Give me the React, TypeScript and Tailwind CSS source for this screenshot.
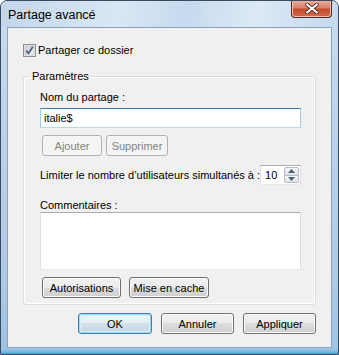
import React from 'react';

// Vista style push button
function Btn({
  children,
  className = '',
  variant = 'normal',
}: {
  children: React.ReactNode;
  className?: string;
  variant?: 'normal' | 'default' | 'disabled';
}) {
  const styles = {
    normal:
      'border-[#707070] bg-[linear-gradient(#f2f2f2,#ebebeb_50%,#dddddd_50%,#cfcfcf)] shadow-[inset_0_0_0_1px_#fcfcfc] text-black',
    default:
      'border-[#3c7fb1] bg-[linear-gradient(#eef5f9,#e4eef4_50%,#d3e1ea_50%,#c4d6e1)] shadow-[inset_0_0_0_1px_#9bd9f5,inset_0_0_0_2px_#d4eefa] text-black',
    disabled: 'border-[#adb2b5] bg-[#f4f4f4] text-[#838383]',
  }[variant];
  return (
    <button
      className={`h-[21px] rounded-[3px] border whitespace-nowrap flex items-center justify-center ${styles} ${className}`}
    >
      {children}
    </button>
  );
}

function CheckBox() {
  return (
    <svg width="13" height="13" viewBox="0 0 13 13">
      <defs>
        <linearGradient id="cb" x1="0" y1="0" x2="1" y2="1">
          <stop offset="0" stopColor="#cbcfd5" />
          <stop offset="1" stopColor="#f6f6f6" />
        </linearGradient>
      </defs>
      <rect x="0.5" y="0.5" width="12" height="12" fill="#f4f4f4" stroke="#8f8f8f" />
      <rect x="2" y="2" width="9" height="9" fill="url(#cb)" stroke="#aeb3b9" strokeWidth="0.6" />
      <path d="M3.2 6.6 L5.4 9.4 L9.8 2.8" fill="none" stroke="#4d6185" strokeWidth="1.8" strokeLinejoin="round" />
    </svg>
  );
}

function Arrow({ up }: { up?: boolean }) {
  return (
    <svg width="7" height="4" viewBox="0 0 7 4">
      <path d={up ? 'M0 4 L3.5 0 L7 4 Z' : 'M0 0 L3.5 4 L7 0 Z'} fill="#4c607a" />
    </svg>
  );
}

export default function App() {
  return (
    <div className="w-[339px] h-[355px] flex flex-col rounded-t-[7px] border border-[#3b4a5c] bg-[linear-gradient(180deg,#c9ddf0,#bcd3ea_35%,#aec9e5_80%,#9cc3e4)] overflow-hidden font-['Liberation_Sans',Arial,sans-serif] text-[11px] leading-[16px] text-black whitespace-nowrap">
      {/* Title bar */}
      <div className="h-[26px] flex items-start bg-[linear-gradient(100deg,#c2d7ec,#d8e7f4_35%,#c6daee_55%,#dce9f5_75%,#c4d9ee)]">
        <span className="ml-[7px] mt-[6px] text-[12.5px]">Partage avancé</span>
        <div className="ml-auto mr-[6px] -mt-[1px] w-[41px] h-[18px] rounded-b-[4px] border border-t-0 border-[#5a2620] bg-[linear-gradient(#eab3a4,#d9806a_45%,#c24b31_55%,#d66b4e)] shadow-[inset_0_0_0_1px_#f2c2b4] flex items-center justify-center">
          <svg width="14" height="11" viewBox="0 0 14 11">
            <path d="M2 1.5 L12 9.5 M12 1.5 L2 9.5" stroke="#5b2b24" strokeWidth="3.6" strokeLinecap="round" />
            <path d="M2 1.5 L12 9.5 M12 1.5 L2 9.5" stroke="#ffffff" strokeWidth="2" strokeLinecap="round" />
          </svg>
        </div>
      </div>

      {/* Client area */}
      <div className="mx-[6px] h-[321px] border border-[#8aa3be] bg-[#f0f0f0] flex flex-col">
        <div className="ml-[15px] mt-[14px] h-[16px] flex items-center gap-[2px]">
          <CheckBox />
          <span>Partager ce dossier</span>
        </div>

        <fieldset className="mx-[15px] mt-[10px] border border-[#d5dfe5] rounded-[3px] shadow-[inset_0_0_0_1px_#ffffff]">
          <legend className="ml-[7px] px-[1px]">Paramètres</legend>
          <div className="pl-[16px] pr-[14px] pb-[6px] flex flex-col">
            <div className="mt-[5px]">Nom du partage :</div>
            <div className="mt-[3px] h-[20px] border border-t-[#3d7bad] border-x-[#a4c9e3] border-b-[#b7d9ed] bg-white px-[3px] flex items-center">
              italie$
            </div>
            <div className="mt-[7px] flex gap-[4px] ml-[2px]">
              <Btn variant="disabled" className="w-[60px]">Ajouter</Btn>
              <Btn variant="disabled" className="w-[62px]">Supprimer</Btn>
            </div>
            <div className="mt-[9px] flex items-center justify-between">
              <span>Limiter le nombre d’utilisateurs simultanés à :</span>
              <div className="h-[20px] w-[41px] border border-t-[#abadb3] border-x-[#dbdfe6] border-b-[#e3e9ef] bg-white flex">
                <span className="pl-[4px] flex items-center">10</span>
                <div className="ml-auto mr-[1px] my-[1px] w-[15px] flex flex-col">
                  <div className="flex-1 border border-[#b7bcc2] rounded-t-[2px] bg-[linear-gradient(#f6f6f6,#dfe3e8)] flex items-center justify-center">
                    <Arrow up />
                  </div>
                  <div className="flex-1 border border-t-0 border-[#b7bcc2] rounded-b-[2px] bg-[linear-gradient(#f6f6f6,#dfe3e8)] flex items-center justify-center">
                    <Arrow />
                  </div>
                </div>
              </div>
            </div>
            <div className="mt-[13px] h-[14px] leading-[14px]">Commentaires :</div>
            <div className="h-[58px] border border-t-[#abadb3] border-x-[#dbdfe6] border-b-[#e3e9ef] bg-white" />
            <div className="mt-[7px] flex gap-[8px] ml-[2px]">
              <Btn className="w-[79px]">Autorisations</Btn>
              <Btn className="w-[80px]">Mise en cache</Btn>
            </div>
          </div>
        </fieldset>

        <div className="mt-[8px] mr-[15px] flex justify-end gap-[9px]">
          <Btn variant="default" className="w-[74px]">OK</Btn>
          <Btn className="w-[73px]">Annuler</Btn>
          <Btn className="w-[73px]">Appliquer</Btn>
        </div>
      </div>

      {/* bottom frame */}
      <div className="flex-1 bg-[linear-gradient(#a8c8e6,#7fb8e0_60%,#3fa4d8)]" />
    </div>
  );
}
